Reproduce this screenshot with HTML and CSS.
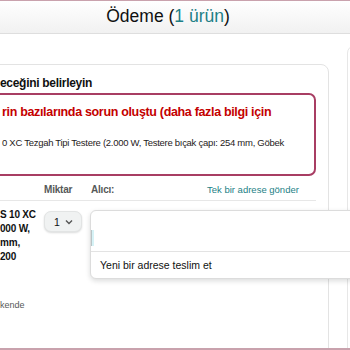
FILE: index.html
```html
<!DOCTYPE html>
<html lang="tr">
<head>
  <meta charset="UTF-8">
  <title>Ödeme</title>
  <link rel="stylesheet" href="styles.css">
</head>
<body>
  <div class="header">
    <h1>Ödeme (<span class="count">1 ürün</span>)</h1>
  </div>
  <div class="main">
    <div class="card">
      <h2>eceğini belirleyin</h2>
      <div class="alert">
        <p class="alertTitle">rin bazılarında sorun oluştu (daha fazla bilgi için</p>
        <p class="alertItem">0 XC Tezgah Tipi Testere (2.000 W, Testere bıçak çapı: 254 mm, Göbek</p>
      </div>
      <div class="tableHead">
        <span></span>
        <span class="colLabel">Miktar</span>
        <span class="colLabel">Alıcı:</span>
        <a href="#" class="link">Tek bir adrese gönder</a>
      </div>
      <div class="itemRow">
        <div class="product">
          <p class="productName">S 10 XC<br>000 W,<br>mm,<br>200</p>
          <p class="stock">kende</p>
        </div>
        <div class="qty">
          <span class="qtyValue">1</span>
          <svg class="chevron" width="8" height="6" viewBox="0 0 8 6"><path d="M1 1.5 L4 4.5 L7 1.5" fill="none" stroke="#555" stroke-width="1.4"/></svg>
        </div>
        <div class="recipient">
          <div class="popover">
            <div class="popInput"><span class="caret"></span></div>
            <div class="popOption">Yeni bir adrese teslim et</div>
          </div>
        </div>
      </div>
    </div>
    <div class="side"></div>
  </div>
</body>
</html>
```

FILE: styles.css
```css
* {
  margin: 0;
  padding: 0;
  box-sizing: border-box;
}

a {
  text-decoration: none;
}

body {
  height: 350px;
  overflow: hidden;
  border-top: 1px solid #c9a2ad;
  border-bottom: 2px solid #c9a2ad;
  font-family: "Liberation Sans", Arial, sans-serif;
  color: #0f1111;
  background: #fff;
}

.header {
  height: 33px;
  background: linear-gradient(#fff, #f1f1f1);
  border-bottom: 1px solid #dedede;
  text-align: center;
  padding-right: 14px;
}

.header h1 {
  font-weight: normal;
  font-size: 17.5px;
  line-height: 30px;
}

.header .count {
  color: #1d7f86;
}

.main {
  display: flex;
  align-items: flex-start;
  gap: 18px;
  padding-top: 11px;
}

.card {
  flex: none;
  width: 360px;
  height: 320px;
  margin-left: -31px;
  margin-top: 19px;
  padding: 10px 12px 0 30px;
  border: 1px solid #e3e3e3;
  border-radius: 8px;
}

.card h2 {
  font-size: 12px;
  letter-spacing: -0.3px;
  line-height: 16px;
  font-weight: bold;
  margin-bottom: 2px;
}

.alert {
  margin-left: -30px;
  padding: 8px 10px 22px 30px;
  border: 2px solid #a83d63;
  border-radius: 7px;
  overflow: hidden;
}

.alertTitle {
  color: #c40000;
  font-weight: bold;
  font-size: 12.5px;
  letter-spacing: -0.33px;
  line-height: 18px;
  white-space: nowrap;
}

.alertItem {
  margin-top: 13px;
  font-size: 9.5px;
  letter-spacing: -0.28px;
  line-height: 18px;
  white-space: nowrap;
  color: #1f2222;
}

.tableHead {
  display: grid;
  grid-template-columns: 44px 47px 116px auto;
  margin-top: 7px;
  padding-bottom: 3px;
  border-bottom: 1px solid #e7e7e7;
  font-size: 10px;
  line-height: 14px;
}

.colLabel {
  color: #565959;
  font-weight: bold;
  letter-spacing: -0.2px;
}

.link {
  color: #1d7f86;
  font-size: 9.5px;
}

.itemRow {
  display: grid;
  grid-template-columns: 44px 46px auto;
  padding-top: 7px;
}

.productName {
  font-size: 10px;
  line-height: 14px;
  font-weight: bold;
  letter-spacing: -0.2px;
}

.stock {
  margin-top: 36px;
  font-size: 9px;
  color: #565959;
}

.qty {
  width: 38px;
  height: 21px;
  margin-top: 3px;
  display: flex;
  align-items: center;
  justify-content: space-between;
  padding: 0 8px 0 9px;
  background: #f0f2f2;
  border: 1px solid #e2e4e4;
  border-radius: 7px;
  box-shadow: 0 1px 2px rgba(15, 17, 17, 0.15);
  font-size: 10.5px;
}

.recipient {
  position: relative;
}

.popover {
  position: absolute;
  left: 0;
  top: 2px;
  width: 280px;
  background: #fff;
  border: 1px solid #dcdcdc;
  border-radius: 6px;
  box-shadow: 0 2px 5px rgba(15, 17, 17, 0.15);
}

.popInput {
  height: 41px;
  border-bottom: 1px solid #e3e3e3;
  position: relative;
}

.caret {
  position: absolute;
  left: 0;
  top: 19px;
  width: 3px;
  height: 16px;
  background: #d6f2f6;
  border-left: 1px solid #b9c4c6;
}

.popOption {
  height: 26px;
  line-height: 26px;
  padding-left: 9px;
  font-size: 10.5px;
}

.side {
  flex: none;
  width: 200px;
  height: 400px;
  border: 1px solid #e7e7e7;
  border-radius: 8px;
}
```
